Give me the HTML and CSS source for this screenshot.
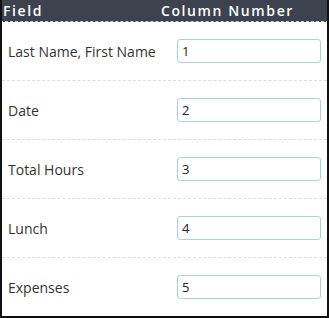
FILE: index.html
```html
<!DOCTYPE html>
<html>
<head>
<meta charset="utf-8">
<link rel="stylesheet" href="styles.css">
</head>
<body>
<div class="panel">
  <div class="head">
    <div class="h-field">Field</div>
    <div class="h-col">Column Number</div>
  </div>
  <div class="row"><div class="label">Last Name, First Name</div><input class="num" type="text" value="1"></div>
  <div class="row"><div class="label">Date</div><input class="num" type="text" value="2"></div>
  <div class="row"><div class="label">Total Hours</div><input class="num" type="text" value="3"></div>
  <div class="row"><div class="label">Lunch</div><input class="num" type="text" value="4"></div>
  <div class="row last"><div class="label">Expenses</div><input class="num" type="text" value="5"></div>
</div>
</body>
</html>
```
FILE: styles.css
```css
html, body { margin: 0; padding: 0; background: #fff; }
.panel {
  width: 329px;
  height: 318px;
  box-sizing: border-box;
  border-left: 2px solid #111;
  border-right: 2px solid #111;
  border-bottom: 2px solid #111;
  font-family: "Open Sans", sans-serif;
  overflow: hidden;
  display: flex;
  flex-direction: column;
}
.head {
  height: 21px;
  margin: 0 -2px;
  background: #3c424e;
  color: #fff;
  display: flex;
  align-items: center;
  font-size: 14px;
  font-weight: 600;
  letter-spacing: 1.6px;
  border-bottom: 1px dashed #ccc;
}
.h-field { width: 158px; padding-left: 3px; }
.h-col { padding-left: 0; }
.row {
  height: 58px;
  border-bottom: 1px dashed #ddd;
  display: flex;
  align-items: center;
  flex-shrink: 0;
}
.row.last { border-bottom: none; flex: 1; }
.label {
  width: 169px;
  padding-left: 6px;
  font-size: 14px;
  color: #333;
}
.num {
  box-sizing: border-box;
  width: 144px;
  height: 24px;
  border: 1px solid #a9d0e8;
  border-radius: 3px;
  padding: 0 4px;
  font-family: "Open Sans", sans-serif;
  font-size: 13px;
  color: #222;
  outline: none;
  margin: 0;
}
```
